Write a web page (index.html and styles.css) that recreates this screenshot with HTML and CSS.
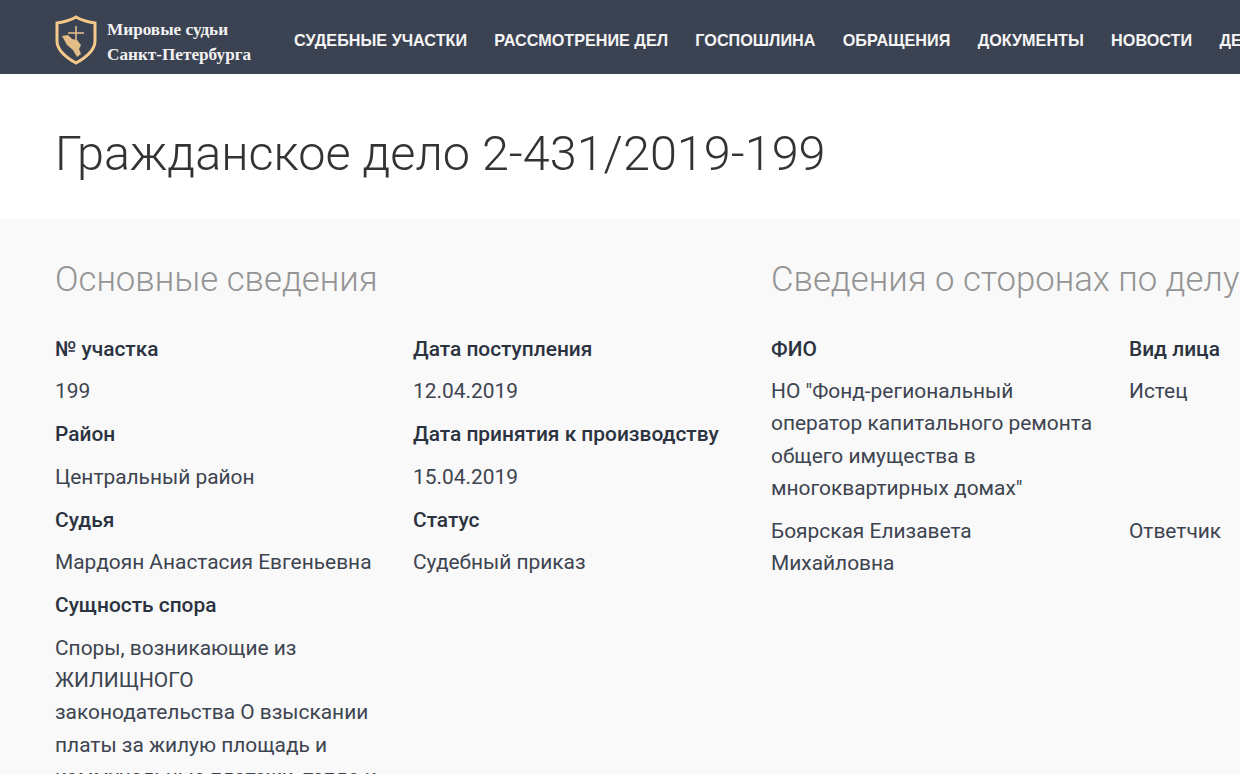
FILE: index.html
```html
<!DOCTYPE html>
<html lang="ru">
<head>
    <meta charset="UTF-8">
    <title>Гражданское дело 2-431/2019-199</title>
    <link rel="stylesheet" href="styles.css">
</head>
<body>
    <header class="topbar">
        <a class="logo" href="#">
            <svg class="logo-icon" width="42" height="50" viewBox="0 0 42 50">
                <path d="M21 2 C16 5 9 7 2 8 V26 C2 36 12 43 21 48 C30 43 40 36 40 26 V8 C33 7 26 5 21 2 Z" fill="none" stroke="#f5c98a" stroke-width="3"/>
                <path d="M21 11 V28 M13 18 H29" fill="none" stroke="#e8c28c" stroke-width="1.5"/>
                <path d="M7 21 L13 20 L17 24 L22 25 L26 30 L24 34 L26 39 L22 42 L18 35 L12 30 Z" fill="#e3bd88"/>
            </svg>
            <span class="logo-text">Мировые судьи<br>Санкт-Петербурга</span>
        </a>
        <nav class="menu">
            <a href="#">СУДЕБНЫЕ УЧАСТКИ</a>
            <a href="#">РАССМОТРЕНИЕ ДЕЛ</a>
            <a href="#">ГОСПОШЛИНА</a>
            <a href="#">ОБРАЩЕНИЯ</a>
            <a href="#">ДОКУМЕНТЫ</a>
            <a href="#">НОВОСТИ</a>
            <a href="#">ДЕЯТЕЛЬНОСТЬ</a>
        </nav>
    </header>

    <section class="title-block">
        <h1>Гражданское дело 2-431/2019-199</h1>
    </section>

    <main class="details">
        <section class="group">
            <h2>Основные сведения</h2>
            <div class="columns">
                <div class="col">
                    <h3>№ участка</h3>
                    <p>199</p>
                    <h3>Район</h3>
                    <p>Центральный район</p>
                    <h3>Судья</h3>
                    <p>Мардоян Анастасия Евгеньевна</p>
                    <h3>Сущность спора</h3>
                    <p>Споры, возникающие из ЖИЛИЩНОГО законодательства О взыскании платы за жилую площадь и коммунальные платежи, тепло и электроэнергию</p>
                </div>
                <div class="col">
                    <h3>Дата поступления</h3>
                    <p>12.04.2019</p>
                    <h3>Дата принятия к производству</h3>
                    <p>15.04.2019</p>
                    <h3>Статус</h3>
                    <p>Судебный приказ</p>
                </div>
            </div>
        </section>
        <section class="group">
            <h2>Сведения о сторонах по делу</h2>
            <div class="parties">
                <h3>ФИО</h3>
                <h3>Вид лица</h3>
                <p>НО "Фонд-региональный оператор капитального ремонта общего имущества в многоквартирных домах"</p>
                <p>Истец</p>
                <p>Боярская Елизавета Михайловна</p>
                <p>Ответчик</p>
            </div>
        </section>
    </main>
</body>
</html>
```

FILE: styles.css
```css
html, body {
    height: 774px;
    overflow: hidden;
}
body {
    margin: 0;
    width: 1240px;
    font-family: Roboto, sans-serif;
    color: #3d4450;
    background-color: #f9f9f9;
}
.topbar {
    display: flex;
    align-items: center;
    box-sizing: border-box;
    height: 74px;
    padding: 6px 0 0 55px;
    background-color: #3b4252;
    white-space: nowrap;
}
.logo {
    display: flex;
    align-items: center;
    color: #f2f2f2;
    text-decoration: none;
}
.logo-icon {
    margin-right: 10px;
}
.logo-text {
    padding-top: 4px;
    font-family: "Liberation Serif", serif;
    font-weight: bold;
    font-size: 17.2px;
    line-height: 25px;
}
.menu {
    display: flex;
    gap: 27.3px;
    margin-left: 43px;
}
.menu a {
    font-family: "Liberation Sans", sans-serif;
    font-weight: bold;
    font-size: 16.2px;
    color: #f5f5f5;
    text-decoration: none;
}
.title-block {
    height: 145px;
    padding-left: 55px;
    background-color: #fff;
}
.title-block h1 {
    margin: 0;
    padding-top: 48px;
    font-weight: 300;
    font-size: 48.6px;
    line-height: 64px;
    color: #333;
    white-space: nowrap;
}
.details {
    display: flex;
    padding: 39px 0 0 55px;
}
.group {
    flex: 0 0 716px;
}
.group h2 {
    margin: 0 0 32.6px;
    font-weight: 300;
    font-size: 34.7px;
    line-height: 42px;
    color: #949494;
    white-space: nowrap;
}
.columns {
    display: flex;
}
.col {
    flex: 0 0 358px;
    box-sizing: border-box;
    padding-right: 35px;
}
.parties {
    display: grid;
    grid-template-columns: 323px 323px;
    column-gap: 35px;
    align-items: start;
}
.group h3 {
    margin: 0;
    font-weight: 500;
    font-size: 20.9px;
    line-height: 32px;
    color: #2b3240;
    white-space: nowrap;
}
.group p {
    margin: 10.7px 0;
    font-size: 20.9px;
    line-height: 32.2px;
}
.parties p {
    margin-bottom: 0;
}
```
